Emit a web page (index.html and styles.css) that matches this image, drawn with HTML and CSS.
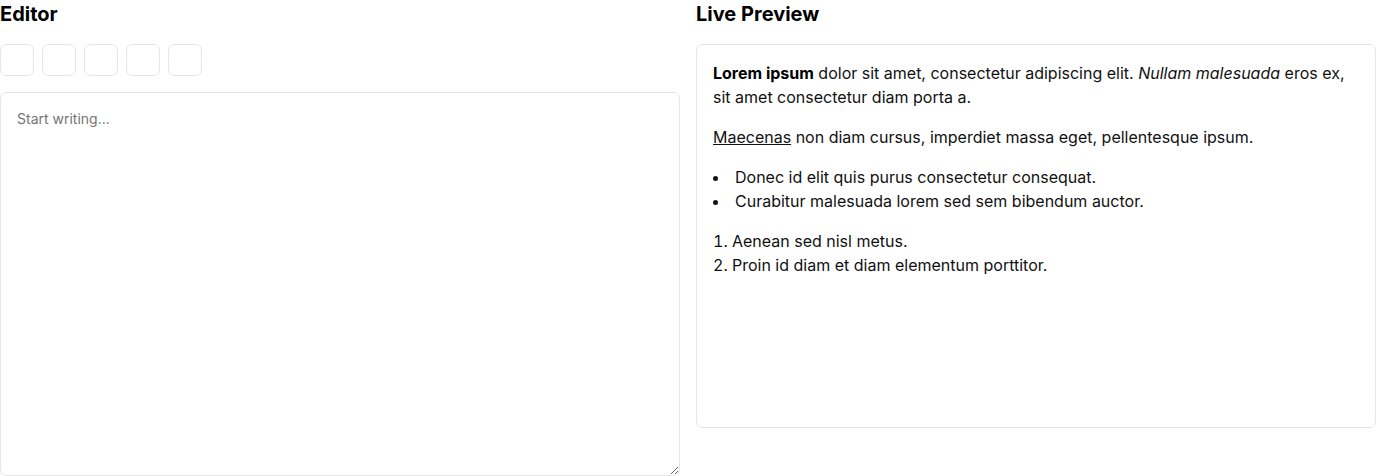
FILE: index.html
```html
<!DOCTYPE html>
<html lang="en">
<head>
<meta charset="utf-8">
<title>Editor</title>
<link rel="stylesheet" href="styles.css">
</head>
<body>
<div class="layout">
  <section class="pane">
    <h2 class="title">Editor</h2>
    <div class="toolbar">
      <button class="tool" type="button"></button>
      <button class="tool" type="button"></button>
      <button class="tool" type="button"></button>
      <button class="tool" type="button"></button>
      <button class="tool" type="button"></button>
    </div>
    <textarea class="editor" placeholder="Start writing..."></textarea>
  </section>
  <section class="pane">
    <h2 class="title">Live Preview</h2>
    <div class="preview">
      <p><strong>Lorem ipsum</strong> dolor sit amet, consectetur adipiscing elit. <em>Nullam malesuada</em> eros ex, sit amet consectetur diam porta a.</p>
      <p><u>Maecenas</u> non diam cursus, imperdiet massa eget, pellentesque ipsum.</p>
      <ul class="bullets">
        <li>Donec id elit quis purus consectetur consequat.</li>
        <li>Curabitur malesuada lorem sed sem bibendum auctor.</li>
      </ul>
      <ol class="numbers">
        <li>Aenean sed nisl metus.</li>
        <li>Proin id diam et diam elementum porttitor.</li>
      </ol>
    </div>
  </section>
</div>
</body>
</html>
```
FILE: styles.css
```css
* { box-sizing: border-box; }
html, body { margin: 0; padding: 0; background: #fff; }
body {
  font-family: Inter, "Noto Sans", sans-serif;
  color: #111;
}
.layout {
  display: grid;
  grid-template-columns: 1fr 1fr;
  gap: 16px;
}
.pane {
  display: flex;
  flex-direction: column;
  gap: 16px;
  min-width: 0;
}
.title {
  margin: 0;
  font-size: 20px;
  line-height: 28px;
  font-weight: 700;
  color: #000;
}
.toolbar {
  display: flex;
  gap: 8px;
}
.tool {
  width: 34px;
  height: 32px;
  padding: 0;
  background: #fff;
  border: 1px solid #e5e7eb;
  border-radius: 6px;
}
.editor {
  display: block;
  width: 100%;
  height: 384px;
  margin: 0;
  padding: 16px;
  border: 1px solid #e5e7eb;
  border-radius: 6px;
  font-family: Inter, "Noto Sans", sans-serif;
  font-size: 14px;
  line-height: 20px;
  color: #111;
  resize: vertical;
  outline: none;
}
.editor::placeholder { color: #757575; }
.preview {
  height: 384px;
  padding: 16px;
  border: 1px solid #e5e7eb;
  border-radius: 6px;
  font-size: 16px;
  line-height: 24px;
  color: #111;
}
.preview p { margin: 0 0 16px; }
.preview strong { font-weight: 700; color: #000; }
.bullets {
  list-style: none;
  margin: 0 0 16px;
  padding: 0;
}
.bullets li::before {
  content: "";
  display: inline-block;
  width: 5px;
  height: 5px;
  border-radius: 50%;
  background: #111;
  margin: 0 17px 0 0;
  vertical-align: middle;
}
.numbers {
  list-style: decimal inside;
  margin: 0;
  padding: 0;
}
```
